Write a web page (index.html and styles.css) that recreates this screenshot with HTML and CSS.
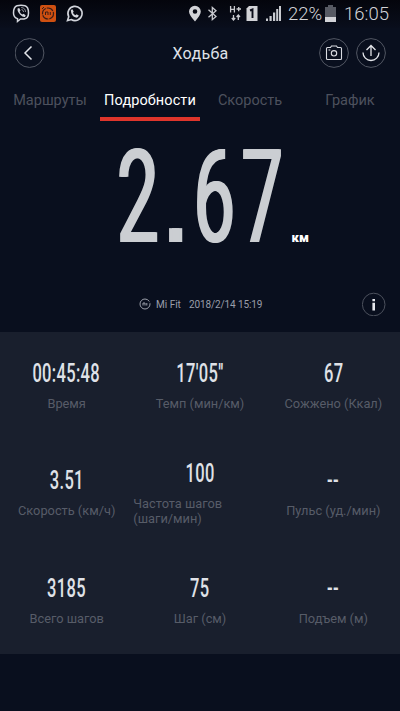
FILE: index.html
```
<!DOCTYPE html>
<html lang="ru">
<head>
<meta charset="utf-8">
<meta name="viewport" content="width=device-width, initial-scale=1">
<title>Ходьба</title>
<link rel="stylesheet" href="styles.css">
</head>
<body>
<div class="status">
  <svg class="notices" width="180" height="28" viewBox="0 0 180 28" fill="none">
    <path d="M17 5.800Q21 4.800 25 5.800Q28.500 6.700 28.500 13Q28.500 18.300 24 19H20.500L17.500 21.500V18.600Q13.500 17.500 13.500 13Q13.500 7 17 5.800Z" stroke="#d2d5dc" stroke-width="1.500"/>
    <path d="M17.600 8.500L19.200 8L20.500 10.600L19.700 11.700Q20.500 13.800 22.400 14.600L23.500 13.800L25.700 15.300L25 17Q23 17.500 20.200 14.800Q17 11.300 17.600 8.500Z" fill="#d2d5dc"/>
    <path d="M21.200 7.500Q25.500 7.800 25.500 12M21.500 9.500Q23.500 9.800 23.600 12" stroke="#aeb2bb" stroke-width=".8"/>
    <rect x="40" y="5" width="16" height="17" rx="2" fill="#cf5011"/>
    <circle cx="48" cy="13.500" r="5.500" stroke="#3a1d18" stroke-width="1.200" stroke-dasharray="7 1"/>
    <path d="M45.500 15V12H48V15M50.300 12V15M42 9L44 7" stroke="#3a1d18"/>
    <path d="M67.500 20.500L68.700 16.700A7.100 7.100 0 1 1 71.300 19.500Z" stroke="#d2d5dc" stroke-width="1.600"/>
    <path d="M70.800 10L72.500 9.200L73.700 11.800L72.900 12.800Q73.700 14.500 75.500 15.200L76.500 14.300L78.800 15.500Q78.200 18 76 17.600Q71.100 16.500 70.800 10Z" fill="#d2d5dc"/>
  </svg>
  <svg class="signals" width="106" height="28" viewBox="180 0 106 28" fill="none">
    <path fill-rule="evenodd" d="M195 21.500Q189 15 189 11.600A5.900 5.900 0 0 1 200.800 11.600Q200.800 15 195 21.500ZM195 9.200A2.300 2.300 0 1 0 195 13.800A2.300 2.300 0 1 0 195 9.200Z" fill="#d2d3d7"/>
    <path d="M208.500 9.800L216 16.500L212.300 19.700V7.500L216 10.700L208.500 17.200" stroke="#c9cbd0" stroke-width="1.300"/>
    <path d="M230.600 6V12.500M234.400 6V12.500M230.600 9.300H234.400M236.500 9H241M238.700 7V11.300M233.500 15V20M231.800 18L233.500 20L235.200 18M238.300 20V15M236.600 17L238.300 15L240 17" stroke="#c9cbd0" stroke-width="1.300"/>
    <path d="M249 6H257.500V21H246.500V8.500Z" fill="#d2d3d7"/>
    <path d="M250 10.500L252.500 9.500V18" stroke="#0a0c18" stroke-width="1.900"/>
    <path d="M266 18.500H268V21H266ZM269.500 16H271.700V21H269.500ZM273 12.500H275.200V21H273ZM276.200 9H278.200V21H276.200ZM279 6H281V21H279Z" fill="#c9cbd0"/>
  </svg>
  <span class="percent">22%</span>
  <svg class="battery" width="11" height="17" viewBox="0 0 11 17"><path d="M3 0H8V2H11V17H0V2H3Z" fill="#575a63"/><path d="M0 12H11V17H0Z" fill="#d2d3d7"/></svg>
  <span class="clock">16:05</span>
</div>
<header class="header">
  <svg width="30" height="30" viewBox="0 0 30 30" fill="none"><circle cx="14.500" cy="15" r="14.400" stroke="#525763"/><path d="M16.500 8.500L10 15L16.500 21.500" stroke="#e3e5ea" stroke-width="1.500"/></svg>
  <h1 class="title">Ходьба</h1>
  <div class="actions">
    <svg width="30" height="30" viewBox="0 0 30 30" fill="none"><circle cx="15" cy="15" r="14.400" stroke="#525763"/><path d="M7.500 10.500Q7.500 9.500 8.500 9.500H11.500L12.500 8H17.500L18.500 9.500H21.500Q22.500 9.500 22.500 10.500V20.500Q22.500 21.500 21.500 21.500H8.500Q7.500 21.500 7.500 20.500ZM9.500 12H11.300" stroke="#dadce2" stroke-width="1.100"/><circle cx="15" cy="15.300" r="2.700" stroke="#dadce2" stroke-width="1.100"/></svg>
    <svg width="30" height="30" viewBox="0 0 30 30" fill="none"><circle cx="15" cy="15" r="14.400" stroke="#525763"/><path d="M15 18V8M10.500 12L15 7.500L19.500 12M7 14.500A8 8 0 0 0 23 14.500" stroke="#e3e5ea" stroke-width="1.300"/></svg>
  </div>
</header>
<nav class="tabs">
  <a class="tab">Маршруты</a>
  <a class="tab active">Подробности</a>
  <a class="tab">Скорость</a>
  <a class="tab">График</a>
</nav>
<section class="hero">
  <div class="distance">
    <span class="km-value">2<span class="point">.</span>67</span>
    <span class="km-unit">км</span>
  </div>
  <div class="source">
    <svg width="12" height="12" viewBox="0 0 12 12" fill="none"><circle cx="6" cy="6" r="5" stroke="#9ca0aa" stroke-dasharray="28 1.500 1 1"/><path d="M4 7.500V5H6V7.500M7.800 5V7.500" stroke="#9ca0aa"/></svg>
    <span class="app">Mi Fit</span>
    <time class="date">2018/2/14 15:19</time>
    <svg class="info" width="24" height="24" viewBox="0 0 24 24"><circle cx="11.700" cy="12.500" r="11.300" fill="none" stroke="#4c515d"/><path d="M10.400 7H13V9.200H10.400ZM10.400 10.800H13V18.500H10.400Z" fill="#e6e8ed"/></svg>
  </div>
</section>
<main class="stats">
  <div class="stat"><b class="value">00:45:48</b><span class="label">Время</span></div>
  <div class="stat"><b class="value">17'05''</b><span class="label">Темп (мин/км)</span></div>
  <div class="stat"><b class="value">67</b><span class="label">Сожжено (Ккал)</span></div>
  <div class="stat"><b class="value">3.51</b><span class="label">Скорость (км/ч)</span></div>
  <div class="stat"><b class="value">100</b><span class="label two-line">Частота шагов<br>(шаги/мин)</span></div>
  <div class="stat"><b class="value">--</b><span class="label">Пульс (уд./мин)</span></div>
  <div class="stat"><b class="value">3185</b><span class="label">Всего шагов</span></div>
  <div class="stat"><b class="value">75</b><span class="label">Шаг (см)</span></div>
  <div class="stat"><b class="value">--</b><span class="label">Подъем (м)</span></div>
</main>
</body>
</html>
```
FILE: styles.css
```
* { box-sizing: border-box; }
body {
  margin: 0;
  height: 711px;
  overflow: hidden;
  background: #090f1e;
  color: #dfe1e7;
  font-family: Roboto, "Liberation Sans", sans-serif;
}
svg { display: block; flex: none; }
.status {
  display: flex;
  height: 28px;
  background: linear-gradient(#04050c, #090e1c);
  color: #d2d3d7;
  font-size: 18.500px;
  font-weight: 300;
  line-height: 28px;
}
.percent { width: 39px; margin-left: 2px; white-space: nowrap; }
.battery { margin: 5px 0 0 -2px; }
.clock { margin-left: 8px; white-space: nowrap; }
.header {
  display: grid;
  grid-template-columns: 72px 1fr 72px;
  align-items: center;
  height: 50px;
  padding: 0 14px 0 15px;
}
.title { margin: 0; text-align: center; font-size: 16px; font-weight: 400; letter-spacing: .3px; }
.actions { display: flex; gap: 7px; justify-content: flex-end; }
.tabs { display: grid; grid-template-columns: repeat(4, 100px); height: 43px; }
.tab {
  height: 43px;
  padding-top: 13px;
  text-align: center;
  color: #4d515d;
  font-size: 14.500px;
  line-height: 20px;
}
.active { color: #fff; border-bottom: 4px solid #df352b; letter-spacing: .1px; }
.hero { height: 211px; }
.distance { display: flex; align-items: baseline; height: 142px; padding-left: 117px; }
.km-value {
  flex: none;
  width: 174.500px;
  color: #cbced2;
  font-size: 130px;
  font-weight: 400;
  line-height: 153px;
  letter-spacing: 11px;
  white-space: nowrap;
  text-shadow: -2px 0 #cbced2, 2px 0 #cbced2;
  transform: scaleX(.57);
  transform-origin: 0 0;
}
.point {
  display: inline-block;
  width: 50px;
  margin: 0 6px 0 -6px;
  font: bold 92px "Liberation Sans", sans-serif;
  letter-spacing: 0;
  text-align: center;
  text-shadow: -5px 0 #cbced2, 5px 0 #cbced2;
}
.km-unit { color: #fff; font-size: 13px; font-weight: 900; }
.source {
  display: flex;
  align-items: center;
  height: 24px;
  margin-top: 29px;
  padding: 0 14px 0 139px;
  color: #9a9eaa;
  font-size: 10px;
}
.app { margin-left: 5px; }
.date { margin-left: 8px; letter-spacing: -.1px; }
.info { margin-left: auto; }
.stats {
  display: grid;
  grid-template-columns: repeat(3, 133.333px);
  grid-template-rows: repeat(3, 107.333px);
  height: 322px;
  background: #191f2d;
}
.stat { display: flex; flex-direction: column; align-items: center; justify-content: center; padding-bottom: 2px; }
.value {
  height: 31px;
  font-size: 25px;
  line-height: 31px;
  font-weight: 500;
  letter-spacing: .5px;
  transform: scaleX(.66);
}
.label {
  margin-top: 7px;
  color: #575c68;
  font-size: 12.800px;
  line-height: 15px;
  white-space: nowrap;
}
.two-line { align-self: stretch; }
```
